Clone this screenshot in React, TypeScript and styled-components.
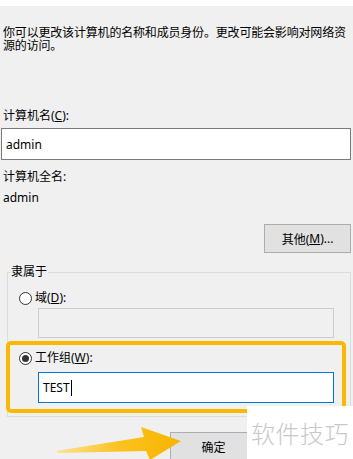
import React from 'react';
import styled, { createGlobalStyle } from 'styled-components';

const Global = createGlobalStyle`
  html, body { margin: 0; padding: 0; background: #f0f0f0; }
  body {
    font-family: "Noto Sans", "Noto Sans CJK SC", sans-serif;
    font-size: 12px;
    color: #000;
  }
  * { box-sizing: border-box; }
`;

const Page = styled.div`
  position: relative;
  width: 353px;
  height: 459px;
  overflow: hidden;
  background: #f0f0f0;
  display: flex;
  flex-direction: column;
`;

const TopStrip = styled.div`
  flex: none;
  height: 6px;
  background: #ffffff;
`;

const Body = styled.div`
  display: flex;
  flex-direction: column;
  padding: 0 2px 0 1px;
`;

const Description = styled.p`
  margin: 20px -6px 0 2px;
  line-height: 13px;
  letter-spacing: -0.18px;
`;

const Label = styled.div<{ $mt: number }>`
  margin-top: ${(p) => p.$mt}px;
  padding-left: 2px;
  line-height: 16px;
`;

const TextBox = styled.div<{ $mt: number; $h: number; $variant?: 'normal' | 'disabled' | 'focused' }>`
  margin-top: ${(p) => p.$mt}px;
  height: ${(p) => p.$h}px;
  display: flex;
  align-items: center;
  padding-left: 4px;
  border: 1px solid
    ${(p) => (p.$variant === 'focused' ? '#0078d7' : p.$variant === 'disabled' ? '#cccccc' : '#7a7a7a')};
  background: ${(p) => (p.$variant === 'disabled' ? '#f0f0f0' : '#ffffff')};
  font-size: 12px;
`;

const GroupInput = styled(TextBox)`
  margin-left: 30px;
  margin-right: 16px;
`;

const Caret = styled.span`
  display: inline-block;
  width: 1px;
  height: 16px;
  margin-left: 1px;
  background: #000;
`;

const Button = styled.div<{ $mt: number; $ml?: number }>`
  margin-top: ${(p) => p.$mt}px;
  margin-left: ${(p) => (p.$ml !== undefined ? `${p.$ml}px` : 'auto')};
  width: 87px;
  height: 29px;
  display: flex;
  align-items: center;
  justify-content: center;
  background: #e1e1e1;
  border: 1px solid #adadad;
  flex: none;
`;

const Group = styled.fieldset`
  margin: 11px 0 0 6px;
  padding: 0 0 13px 0;
  min-width: 0;
  border: 1px solid #dcdcdc;
  display: flex;
  flex-direction: column;
`;

const Legend = styled.legend`
  margin-left: 2px;
  padding: 0 1px;
  line-height: 16px;
`;

const RadioRow = styled.div<{ $mt: number }>`
  margin-top: ${(p) => p.$mt}px;
  height: 16px;
  display: flex;
  align-items: center;
  gap: 3px;
  padding-left: 11px;
  line-height: 16px;
`;

const RadioCircle = styled.span<{ $checked?: boolean }>`
  width: 13px;
  height: 13px;
  border-radius: 50%;
  border: 1px solid #333333;
  background: #ffffff;
  display: flex;
  align-items: center;
  justify-content: center;
  &::after {
    content: '';
    width: 7px;
    height: 7px;
    border-radius: 50%;
    background: ${(p) => (p.$checked ? '#333333' : 'transparent')};
  }
`;

const Highlight = styled.div`
  position: absolute;
  left: 6px;
  top: 341px;
  width: 340px;
  height: 72px;
  border: 4px solid #fbb800;
  border-radius: 5px;
  pointer-events: none;
`;

const Watermark = styled.div`
  position: absolute;
  left: 247px;
  top: 406px;
  right: 0;
  bottom: 0;
  background: #ffffff;
  padding: 13px 0 0 4px;
  font-family: "Noto Sans CJK SC", sans-serif;
  font-weight: 300;
  font-size: 24px;
  line-height: 28px;
  letter-spacing: 0.5px;
  color: #c8c8c8;
  white-space: nowrap;
`;

const ArrowSvg = styled.svg`
  position: absolute;
  left: 0;
  top: 420px;
  pointer-events: none;
`;

export default function App() {
  return (
    <Page>
      <Global />
      <TopStrip />
      <Body>
        <Description>你可以更改该计算机的名称和成员身份。更改可能会影响对网络资源的访问。</Description>
        <Label $mt={56}>
          计算机名(<u>C</u>):
        </Label>
        <TextBox $mt={4} $h={32}>admin</TextBox>
        <Label $mt={9}>计算机全名:</Label>
        <Label $mt={5}>admin</Label>
        <Button $mt={18}>
          其他(<u>M</u>)...
        </Button>
        <Group>
          <Legend>隶属于</Legend>
          <RadioRow $mt={10}>
            <RadioCircle />
            <span>
              域(<u>D</u>):
            </span>
          </RadioRow>
          <GroupInput $mt={2} $h={30} $variant="disabled" />
          <RadioRow $mt={12}>
            <RadioCircle $checked />
            <span>
              工作组(<u>W</u>):
            </span>
          </RadioRow>
          <GroupInput $mt={6} $h={31} $variant="focused">
            TEST
            <Caret />
          </GroupInput>
        </Group>
        <Button $mt={15} $ml={169}>
          确定
        </Button>
      </Body>
      <Highlight />
      <Watermark>软件技巧</Watermark>
      <ArrowSvg width="200" height="39" viewBox="0 420 200 39">
        <defs>
          <linearGradient id="arrowGrad" x1="0" x2="1" y1="0" y2="0">
            <stop offset="0" stopColor="#fde39a" />
            <stop offset="0.5" stopColor="#fbc21e" />
            <stop offset="1" stopColor="#f8b400" />
          </linearGradient>
        </defs>
        <polygon
          points="56,451 144,437 141,427 181,441 150,460 146,451 58,453"
          fill="url(#arrowGrad)"
        />
      </ArrowSvg>
    </Page>
  );
}
